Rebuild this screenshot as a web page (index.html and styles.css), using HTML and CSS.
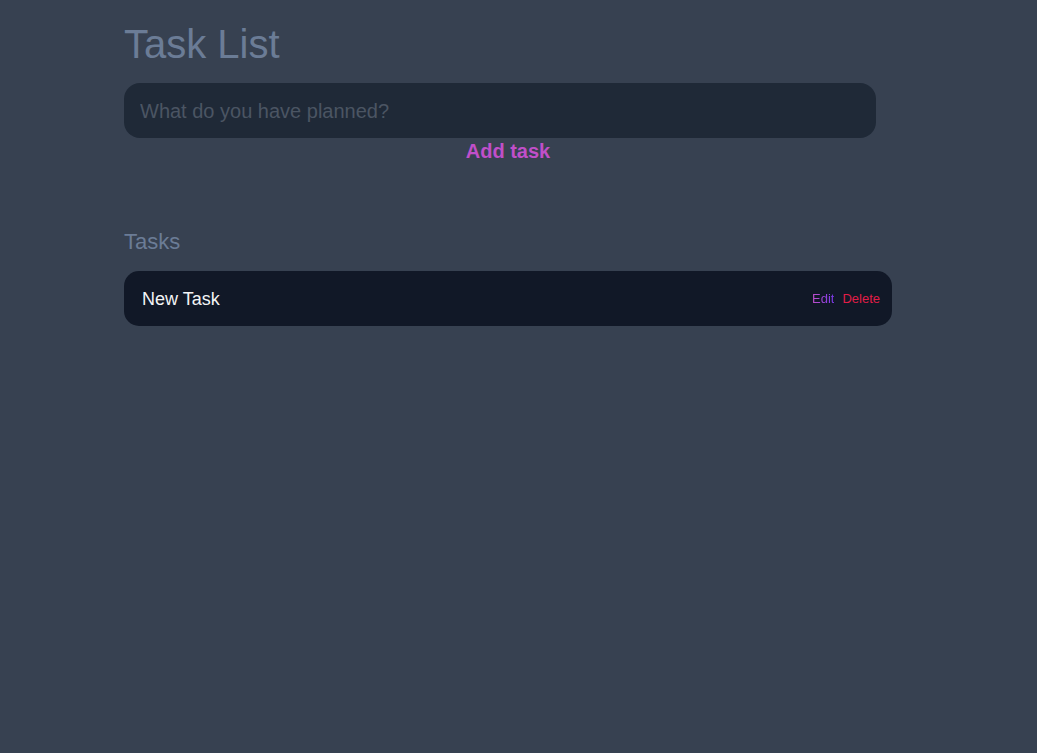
FILE: index.html
```html
<!DOCTYPE html>
<html>
<head>
<meta charset="utf-8">
<link rel="stylesheet" href="styles.css">
</head>
<body>
<main class="container">
  <h1 class="title">Task List</h1>
  <form class="new-task">
    <input class="task-input" type="text" placeholder="What do you have planned?">
    <button class="add-btn" type="button">Add task</button>
  </form>
  <section class="tasks">
    <h2 class="tasks-title">Tasks</h2>
    <div class="task">
      <span class="task-text">New Task</span>
      <div class="actions">
        <button class="edit" type="button">Edit</button>
        <button class="delete" type="button">Delete</button>
      </div>
    </div>
  </section>
</main>
</body>
</html>
```
FILE: styles.css
```css
html, body {
  margin: 0;
  padding: 0;
  background: #374151;
  font-family: "Liberation Sans", Arial, sans-serif;
  min-height: 100vh;
}
.container {
  width: 768px;
  margin-left: 124px;
  padding-top: 20px;
}
.title {
  margin: 0;
  font-size: 40px;
  font-weight: 400;
  color: #6b7c96;
  line-height: 48px;
}
.new-task {
  margin-top: 15px;
  display: flex;
  flex-direction: column;
}
.task-input {
  width: 752px;
  box-sizing: border-box;
  height: 55px;
  border: none;
  border-radius: 16px;
  background: #1f2937;
  padding: 1px 16px 0;
  font-family: inherit;
  font-size: 20px;
  color: #d1d5db;
  outline: none;
}
.task-input::placeholder {
  color: #4b5563;
}
.add-btn {
  align-self: center;
  background: none;
  border: none;
  font-family: inherit;
  font-size: 20px;
  font-weight: 700;
  color: #c04fc9;
  padding: 0;
  margin-top: 1px;
  line-height: 24px;
  cursor: pointer;
}
.tasks {
  margin-top: 66px;
}
.tasks-title {
  margin: 0;
  font-size: 22px;
  font-weight: 400;
  color: #6b7c96;
  line-height: 26px;
}
.task {
  margin-top: 16px;
  height: 55px;
  box-sizing: border-box;
  background: #111827;
  border-radius: 15px;
  display: flex;
  align-items: center;
  justify-content: space-between;
  padding: 0 12px 0 18px;
}
.task-text {
  color: #f3f4f6;
  font-size: 18px;
  padding-top: 2px;
}
.actions {
  display: flex;
  gap: 8px;
}
.actions button {
  background: none;
  border: none;
  padding: 0;
  font-family: inherit;
  font-size: 13px;
  cursor: pointer;
}
.edit {
  background: linear-gradient(90deg, #c04fc9, #7c3aed) !important;
  -webkit-background-clip: text !important;
  background-clip: text !important;
  color: transparent;
}
.delete {
  color: #e11d48;
}
```
